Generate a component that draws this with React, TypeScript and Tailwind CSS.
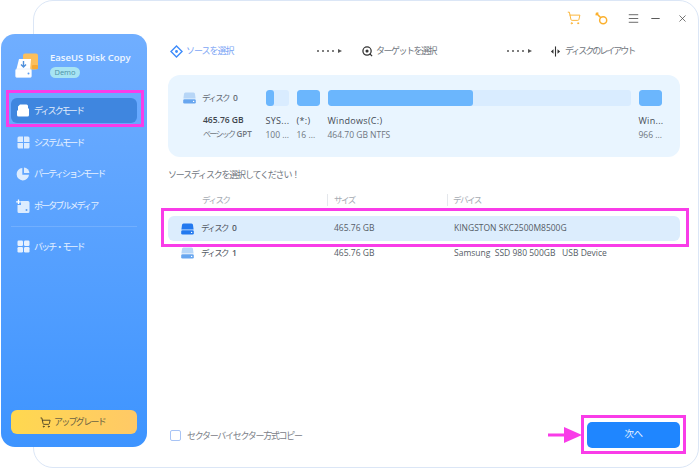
import React from "react";
import { ShoppingCart, X, Minus, Menu } from "lucide-react";

function DiskIcon({ top, bottom, className }: { top: string; bottom: string; className?: string }) {
  return (
    <svg viewBox="0 0 13 12" className={className}>
      <path d="M2.5 0.5h8a1.5 1.5 0 0 1 1.5 1.5l0.6 4.5H0.4L1 2a1.5 1.5 0 0 1 1.5-1.5z" fill={top} />
      <rect x="0.2" y="7.2" width="12.6" height="4.4" rx="1.3" fill={bottom} />
      <circle cx="10.6" cy="9.4" r="0.7" fill="#fff" />
    </svg>
  );
}

function NavItem({ icon, label, active }: { icon: React.ReactNode; label: string; active?: boolean }) {
  return (
    <div className={`relative flex items-center h-[25px] rounded-[6px] pl-[5px] gap-[4px] ${active ? "bg-[#3f86df]" : ""}`}>
      <span className="w-[14px] h-[14px] flex items-center justify-center shrink-0">{icon}</span>
      <span className="text-[9px] tracking-[-1.9px] text-white/85 whitespace-nowrap">{label}</span>
      {active && <span className="absolute left-[-5px] right-[-7px] top-[-8px] bottom-[-4px] border-[3px] border-[#f93ce8]" />}
    </div>
  );
}

function Partition({ width, fill, name, sub, gap }: { width: number; fill: number; name: string; sub: string; gap: number }) {
  return (
    <div className="flex flex-col shrink-0" style={{ width, marginRight: gap }}>
      <div className="h-[16px] rounded-[3px] bg-[#d9ecff] overflow-hidden">
        <div className="h-full rounded-[3px] bg-[#6bb6fd]" style={{ width: fill }} />
      </div>
      <span className="mt-[9px] text-[9px] tracking-[0.3px] leading-[12px] font-medium text-[#444b55] whitespace-nowrap">{name}</span>
      <span className="mt-[2px] text-[8.5px] leading-[12px] text-[#6f7680] whitespace-nowrap">{sub}</span>
    </div>
  );
}

function Dots() {
  return (
    <span className="flex items-center gap-[3px] shrink-0">
      {[0, 1, 2, 3].map((i) => (
        <span key={i} className="w-[2px] h-[2px] rounded-full bg-[#555]" />
      ))}
      <span className="w-0 h-0 ml-[1px] border-y-[2.5px] border-y-transparent border-l-[4px] border-l-[#555]" />
    </span>
  );
}

function DiskName({ n }: { n: string }) {
  return (
    <span className="whitespace-nowrap">
      <span className="tracking-[-1.6px]">ディスク</span>
      <b className="ml-[4px] font-semibold">{n}</b>
    </span>
  );
}

export default function App() {
  return (
    <div
      className="relative flex w-[700px] h-[468px] bg-white overflow-hidden"
      style={{ fontFamily: '"Open Sans","Noto Sans CJK JP",sans-serif' }}
    >
      {/* sidebar */}
      <aside className="relative z-10 shrink-0 flex flex-col w-[146px] h-[413px] ml-[1px] mt-[34px] rounded-[14px] bg-gradient-to-b from-[#70aeff] to-[#3d94ff] px-[10px]">
        <div className="flex items-start h-[56px] pt-[19px] pl-[4px]">
          <svg viewBox="0 0 24 25" className="w-[24px] h-[25px] shrink-0">
            <rect x="8" y="0.5" width="15" height="16" rx="2" fill="#fbbf5d" />
            <rect x="17" y="12" width="6" height="4" rx="1" fill="#f7a935" />
            <path d="M4 6h12l-1 12H1z" fill="#fff" />
            <rect x="0.5" y="16" width="16" height="8.5" rx="1.5" fill="#fff" stroke="#d6e8ff" strokeWidth="0.6" />
            <path d="M8.5 8v6M6 11.5l2.5 2.5 2.5-2.5" stroke="#4f90dc" strokeWidth="1.4" fill="none" />
            <circle cx="13.5" cy="20.5" r="1" fill="#5b9ef2" />
          </svg>
          <div className="ml-[11px] -mt-[2px] flex flex-col">
            <span className="text-[9.5px] leading-[14px] font-semibold text-white/90 whitespace-nowrap">EaseUS Disk Copy</span>
            <span className="mt-[2px] w-[30px] h-[11px] rounded-full bg-[#a7e4f3] text-[#4d93a8] text-[7.5px] leading-[11px] text-center">Demo</span>
          </div>
        </div>
        <div className="mt-[8px]">
          <NavItem
            active
            label="ディスクモード"
            icon={
              <svg viewBox="0 0 12 13" className="w-[12px] h-[13px]" fill="#fff">
                <path d="M3 0.5h6.5a1.5 1.5 0 0 1 1.5 1.5v2l1 1v6a1.5 1.5 0 0 1-1.5 1.5h-9A1.5 1.5 0 0 1 0 11V7l1-1V2.5z" />
              </svg>
            }
          />
        </div>
        <div className="mt-[7px]">
          <NavItem
            label="システムモード"
            icon={
              <svg viewBox="0 0 13 13" className="w-[13px] h-[13px]" fill="#dcecff">
                <path d="M0.5 2a1.5 1.5 0 0 1 1.5-1.5h4V6H0.5z" />
                <path d="M7 0.5h4A1.5 1.5 0 0 1 12.5 2v4H7z" />
                <path d="M0.5 7H6v5.5H2A1.5 1.5 0 0 1 0.5 11z" />
                <path d="M7 7h5.5v4a1.5 1.5 0 0 1-1.5 1.5H7z" />
              </svg>
            }
          />
        </div>
        <div className="mt-[6px]">
          <NavItem
            label="パーティションモード"
            icon={
              <svg viewBox="0 0 14 14" className="w-[14px] h-[14px]" fill="#dcecff">
                <path d="M6.3 1a6.2 6.2 0 1 0 6.7 6.7H6.3z" />
                <path d="M8 0.6V6h5.4A5.6 5.6 0 0 0 8 0.6z" />
              </svg>
            }
          />
        </div>
        <div className="mt-[7px]">
          <NavItem
            label="ポータブルメディア"
            icon={
              <svg viewBox="0 0 14 14" className="w-[14px] h-[14px]">
                <path d="M5 2h7a1.5 1.5 0 0 1 1.5 1.5v9a1.5 1.5 0 0 1-1.5 1.5H3a1.5 1.5 0 0 1-1.5-1.5V6H5z" fill="#dcecff" />
                <path d="M2.5 0.5v4.5M0.2 2.8h4.6" stroke="#fff" strokeWidth="1.3" fill="none" />
                <circle cx="10.5" cy="11" r="1" fill="#5b9ef2" />
              </svg>
            }
          />
        </div>
        <div className="mt-[8px] h-px bg-white/15" />
        <div className="mt-[7px]">
          <NavItem
            label="バッチ・モード"
            icon={
              <svg viewBox="0 0 13 13" className="w-[13px] h-[13px]" fill="#e6f1ff">
                <rect x="0.5" y="0.5" width="5.5" height="5.5" rx="1.2" />
                <rect x="7" y="0.5" width="5.5" height="5.5" rx="1.2" />
                <rect x="0.5" y="7" width="5.5" height="5.5" rx="1.2" />
                <rect x="7" y="7" width="5.5" height="5.5" rx="1.2" />
              </svg>
            }
          />
        </div>
        <div className="mt-auto mb-[13px] h-[24px] rounded-[6px] bg-gradient-to-r from-[#ffd84f] to-[#ffc966] flex items-center justify-center gap-[3px] pr-[3px]">
          <ShoppingCart className="w-[11px] h-[11px] text-[#4b4326]" strokeWidth={2} />
          <span className="text-[9px] tracking-[-1.7px] text-[#6b6343]">アップグレード</span>
        </div>
      </aside>

      {/* window */}
      <main className="flex-1 -ml-[114px] mr-[1px] mb-[0.5px] flex flex-col border border-[#dbe6f6] rounded-[20px] bg-white pl-[134px] pr-[18px]">
        <div className="h-[33px] shrink-0 flex items-center justify-end -mr-[8px] pt-[1px]">
          <ShoppingCart className="w-[14px] h-[14px] text-[#fbb02d]" strokeWidth={1.6} />
          <svg viewBox="0 0 14 14" className="w-[13px] h-[13px] ml-[14px]" fill="none" stroke="#fbb02d" strokeWidth="1.6">
            <circle cx="8.8" cy="8.8" r="3.8" />
            <path d="M6 6L1.5 1.5M3 1.2L1.2 3" strokeLinecap="round" />
          </svg>
          <Menu className="w-[13px] h-[13px] text-[#555] ml-[19px]" strokeWidth={1.6} />
          <Minus className="w-[13px] h-[13px] text-[#555] ml-[9px]" strokeWidth={1.8} />
          <X className="w-[11px] h-[11px] text-[#444] ml-[15px]" strokeWidth={1.6} />
        </div>

        {/* steps */}
        <div className="mt-[9px] h-[16px] shrink-0 flex items-center pl-[2px]">
          <svg viewBox="0 0 13 13" className="w-[13px] h-[13px] shrink-0" fill="none" stroke="#3d8bfb" strokeWidth="1.4">
            <path d="M6.5 1L12 6.5 6.5 12 1 6.5z" />
            <circle cx="6.5" cy="6.5" r="1.4" fill="#3d8bfb" stroke="none" />
          </svg>
          <span className="ml-[3px] w-[131px] text-[9px] tracking-[-1px] text-[#7da6f5] whitespace-nowrap">ソースを選択</span>
          <Dots />
          <svg viewBox="0 0 12 12" className="w-[11px] h-[11px] ml-[20px] shrink-0" fill="none" stroke="#333" strokeWidth="1.4">
            <circle cx="5.5" cy="5.5" r="4.5" />
            <circle cx="5.5" cy="5.5" r="1" fill="#333" />
            <path d="M8.5 8.5L11 11" />
          </svg>
          <span className="ml-[3px] w-[131px] text-[9px] tracking-[-1.5px] text-[#70767e] whitespace-nowrap">ターゲットを選択</span>
          <Dots />
          <svg viewBox="0 0 12 12" className="w-[11px] h-[11px] ml-[18px] shrink-0" fill="#333">
            <rect x="5.4" y="0.5" width="1.2" height="11" />
            <path d="M3.8 3.5v5L1 6zM8.2 3.5v5L11 6z" />
          </svg>
          <span className="ml-[4px] text-[9px] tracking-[-2px] text-[#70767e] whitespace-nowrap">ディスクのレイアウト</span>
        </div>

        {/* disk card */}
        <section className="mt-[16px] h-[82px] shrink-0 rounded-[12px] bg-[#e9f5ff] flex pt-[15px] pl-[15px]">
          <div className="w-[82.5px] shrink-0 flex flex-col">
            <div className="flex items-center h-[16px]">
              <DiskIcon top="#b7d6f7" bottom="#68a6ef" className="w-[13px] h-[12px]" />
              <span className="ml-[6px] text-[8.5px] text-[#666d76]"><DiskName n="0" /></span>
            </div>
            <span className="mt-[8px] ml-[20px] text-[8.5px] leading-[12px] font-semibold text-[#3f454d] whitespace-nowrap">465.76 GB</span>
            <span className="mt-[2px] ml-[20px] text-[8px] leading-[12px] text-[#6f7680] whitespace-nowrap">
              <span className="tracking-[-1.7px]">ベーシック</span> <b className="font-semibold">GPT</b>
            </span>
          </div>
          <Partition width={23} fill={8} name="SYS..." sub="100 ..." gap={8} />
          <Partition width={23} fill={23} name="(*:)" sub="16 ..." gap={8} />
          <Partition width={303} fill={145} name="Windows(C:)" sub="464.70 GB NTFS" gap={8} />
          <Partition width={23} fill={23} name="Win..." sub="966 ..." gap={0} />
        </section>

        <p className="mt-[11px] h-[14px] shrink-0 text-[9px] tracking-[-1.2px] leading-[14px] text-[#70767e] whitespace-nowrap">
          ソースディスクを選択してください！
        </p>

        {/* table header */}
        <div className="mt-[11px] h-[14px] shrink-0 flex items-center text-[8.5px] tracking-[-1.5px] text-[#a5abb3]">
          <span className="w-[160px] pl-[34px] border-r border-[#e4e7ec]">ディスク</span>
          <span className="w-[120px] pl-[6px] border-r border-[#e4e7ec]">サイズ</span>
          <span className="pl-[5px]">デバイス</span>
        </div>

        {/* rows */}
        <div className="relative mt-[9px] h-[25px] shrink-0 rounded-[6px] bg-[#dcedfd] flex items-center text-[8.5px] text-[#555c66]">
          <span className="w-[166px] pl-[13px] flex items-center shrink-0">
            <DiskIcon top="#2379ef" bottom="#2379ef" className="w-[13px] h-[12px]" />
            <span className="ml-[7px]"><DiskName n="0" /></span>
          </span>
          <span className="w-[120px] shrink-0">465.76 GB</span>
          <span className="whitespace-nowrap">KINGSTON SKC2500M8500G</span>
          <span className="absolute left-[-7px] right-[-9px] top-[-8px] bottom-[-6px] border-[3px] border-[#f93ce8]" />
        </div>
        <div className="h-[24px] shrink-0 flex items-center text-[8.5px] text-[#555c66]">
          <span className="w-[166px] pl-[13px] flex items-center shrink-0">
            <DiskIcon top="#b7d6f7" bottom="#68a6ef" className="w-[13px] h-[12px]" />
            <span className="ml-[7px]"><DiskName n="1" /></span>
          </span>
          <span className="w-[120px] shrink-0">465.76 GB</span>
          <span className="whitespace-pre">Samsung  SSD 980 500GB   USB Device</span>
        </div>

        {/* footer */}
        <div className="mt-auto mb-[19px] h-[26px] shrink-0 flex items-center justify-between">
          <label className="flex items-center pl-[2px] pt-[2px]">
            <span className="w-[11px] h-[11px] rounded-[2px] border border-[#a8c4f5] bg-white" />
            <span className="ml-[6px] text-[9px] tracking-[-1.3px] text-[#7b8088] whitespace-nowrap">セクターバイセクター方式コピー</span>
          </label>
          <div className="relative flex items-center">
            <svg viewBox="0 0 34 16" className="absolute left-[-39px] top-[5px] w-[34px] h-[16px]">
              <rect x="0" y="6.5" width="17" height="3" fill="#f93ce8" />
              <path d="M16 0l18 8-18 8z" fill="#f93ce8" />
            </svg>
            <button className="w-[93px] h-[26px] rounded-[5px] bg-[#1f86ff] text-[9.5px] tracking-[-0.5px] text-white/90">次へ</button>
            <span className="absolute left-[-6px] right-[-6px] top-[-7px] bottom-[-6px] border-[3px] border-[#f93ce8]" />
          </div>
        </div>
      </main>
    </div>
  );
}
